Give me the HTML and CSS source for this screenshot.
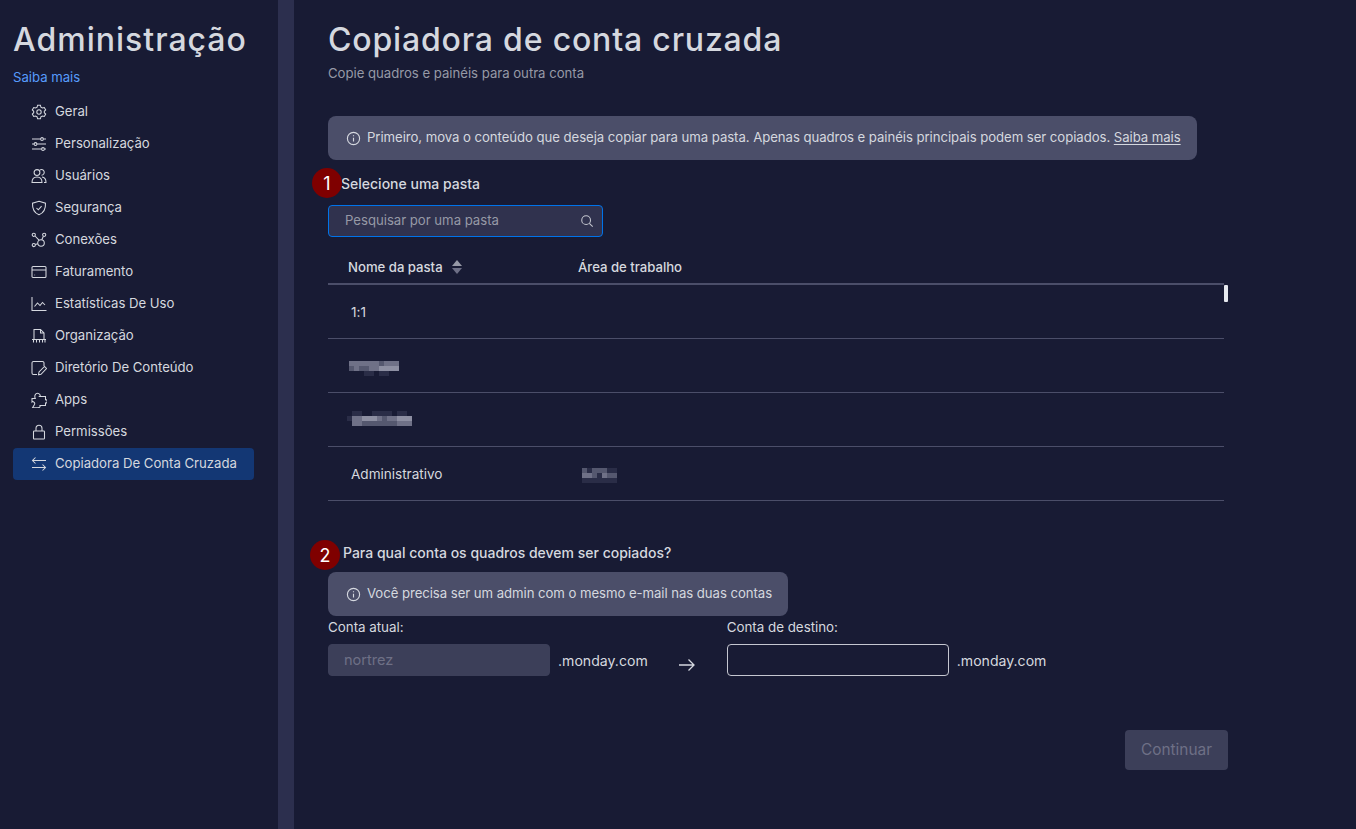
FILE: index.html
```html
<!DOCTYPE html>
<html lang="pt">
<head>
<meta charset="utf-8">
<title>Copiadora de conta cruzada</title>
<link rel="stylesheet" href="styles.css">
</head>
<body>
<div class="app">
  <aside class="sidebar">
    <h2 class="side-title">Administração</h2>
    <a class="side-link">Saiba mais</a>
    <nav class="nav">
      <div class="nav-item"><svg class="ico" viewBox="0 0 16 16"><path d="M6.600 1.200h2.800l.5 1.900 1.500.9 1.900-.5 1.400 2.400-1.400 1.400v1.400l1.400 1.400-1.400 2.400-1.900-.5-1.500.9-.5 1.900H6.600l-.5-1.900-1.500-.9-1.900.5-1.400-2.400 1.400-1.400V7.300L1.300 5.900l1.400-2.400 1.900.5 1.500-.9z"/><circle cx="8" cy="8" r="2.200"/></svg>Geral</div>
      <div class="nav-item"><svg class="ico" viewBox="0 0 16 16"><path d="M1 3h8.500M12.500 3H15M1 8h2M6 8h9M1 13h9.500M13.500 13H15"/><circle cx="11" cy="3" r="1.400"/><circle cx="4.500" cy="8" r="1.400"/><circle cx="12" cy="13" r="1.400"/></svg>Personalização</div>
      <div class="nav-item"><svg class="ico" viewBox="0 0 16 16"><circle cx="6" cy="4.500" r="2.900"/><path d="M9 2a2.800 2.800 0 1 1 1.500 5.200M1 14.500c0-3.600 1.900-5.600 5-5.600s5 2 5 5.600zM11 9c2.500.2 4 2.300 4 5.500h-2"/></svg>Usuários</div>
      <div class="nav-item"><svg class="ico" viewBox="0 0 16 16"><path d="M8 1.200l6.500 2c.3 5.800-1.500 9.500-6.500 11.600C3 12.700 1.200 9 1.500 3.200z"/><path d="M5.500 8l1.800 1.800 3.300-3.600"/></svg>Segurança</div>
      <div class="nav-item"><svg class="ico" viewBox="0 0 16 16"><circle cx="2.800" cy="2.800" r="1.600"/><circle cx="13.200" cy="2.800" r="1.600"/><circle cx="2.800" cy="13" r="1.600"/><circle cx="10" cy="11" r="3.300"/><path d="M4 4l4 4.200M12.400 4.200l-1.600 3.600M4.300 12.600l2.500-.8"/></svg>Conexões</div>
      <div class="nav-item"><svg class="ico" viewBox="0 0 16 16"><rect x="1" y="2.500" width="14" height="11" rx="1"/><path d="M1 6h14M3.500 11h.6"/></svg>Faturamento</div>
      <div class="nav-item"><svg class="ico" viewBox="0 0 16 16"><path d="M1 1v13.500h14.500M3.500 10.500l3-3.500 2.500 2.500 2.500-3 2.500 2.500"/></svg>Estatísticas De Uso</div>
      <div class="nav-item"><svg class="ico" viewBox="0 0 16 16"><path d="M3 11.500V1.500h6.500l3.500 3.500v6.500M9.500 1.500V5H13M1 11.500h14M2.500 11.500v3M5.500 11.500v3M8.500 11.500v3M11.500 11.500v3M14 11.500v3"/></svg>Organização</div>
      <div class="nav-item"><svg class="ico" viewBox="0 0 16 16"><path d="M13 6V3a1.500 1.500 0 0 0-1.500-1.500h-9A1.500 1.500 0 0 0 1 3v10a1.500 1.500 0 0 0 1.500 1.500H6"/><path d="M7.500 14.800L8 12l5.500-5.500 2 2L10 14.300z"/></svg>Diretório De Conteúdo</div>
      <div class="nav-item"><svg class="ico" viewBox="0 0 16 16"><path d="M1 6.500h3.300c-1.300-3 .3-5.300 2.200-5.300s3.500 2.300 2.200 3.300h5.800v3.200c2.300-.6 2.300 3.800 0 3.300v2.500H9c.5 1.500-.7 2.300-2 2.300H1.500l2-3.300c.9-1.900-1.500-3.500-2.500-2.500z"/></svg>Apps</div>
      <div class="nav-item"><svg class="ico" viewBox="0 0 16 16"><rect x="2.500" y="7" width="11" height="8" rx=".8"/><path d="M5 7V4.200a3 3 0 0 1 6 0V7"/></svg>Permissões</div>
      <div class="nav-item active"><svg class="ico" viewBox="0 0 16 16"><path d="M15 4.500H1.500M4.500 1.500l-3 3 3 3M1 11.500h13.500M11.500 8.500l3 3-3 3"/></svg>Copiadora De Conta Cruzada</div>
    </nav>
  </aside>
  <div class="rail"></div>
  <main class="main">
    <h1 class="title">Copiadora de conta cruzada</h1>
    <p class="subtitle">Copie quadros e painéis para outra conta</p>
    <div class="banner banner-wide">
      <svg class="info" viewBox="0 0 16 16"><circle cx="8" cy="8" r="6.500"/><path d="M8 7.300v4M8 4.600v1"/></svg>
      <span>Primeiro, mova o conteúdo que deseja copiar para uma pasta. Apenas quadros e painéis principais podem ser copiados. <u>Saiba mais</u></span>
    </div>
    <div class="step-head step-one"><span class="badge badge-one">1</span>Selecione uma pasta</div>
    <div class="search">
      <span>Pesquisar por uma pasta</span>
      <svg class="search-ico" viewBox="0 0 16 16"><circle cx="7" cy="7" r="5"/><path d="M10.700 10.700l3.800 3.800"/></svg>
    </div>
    <div class="table">
      <div class="thead">
        <div class="col-a">Nome da pasta<svg class="sort" viewBox="0 0 10 14"><path d="M5 0l5 6H0z" class="sort-up"/><path d="M5 14L0 8h10z" class="sort-down"/></svg></div>
        <div class="col-b">Área de trabalho</div>
        <span class="thumb"></span>
      </div>
      <div class="row"><div class="col-a cell cell-text">1:1</div></div>
      <div class="row"><div class="col-a cell">
        <svg class="mosaic mosaic-a" width="50" height="15" viewBox="0 0 50 15"><path class="m2" d="M0 0h15v5H0zM15 0h15v5H15zM35 0h15v5H35zM5 5h5v5H5zM20 5h10v5H20z"/><path class="m1" d="M30 0h5v5h-5zM0 5h5v5H0zM10 5h10v5H10z"/><path class="m3" d="M30 5h20v5H30z"/><path class="m0" d="M15 10h10v5H15zM30 10h10v5H30z"/></svg>
      </div></div>
      <div class="row"><div class="col-a cell">
        <svg class="mosaic mosaic-b" width="65" height="15" viewBox="0 0 65 15"><path class="m0" d="M5 0h10v5H5zM25 0h20v5H25zM50 0h10v5H50zM0 5h5v5H0z"/><path class="m3" d="M15 5h15v5H15zM50 5h15v5H50z"/><path class="m2" d="M5 5h10v5H5zM30 5h5v5h-5zM40 5h10v5H40zM5 10h10v5H5zM50 10h15v5H50z"/><path class="m1" d="M35 5h5v5h-5zM15 10h35v5H15z"/></svg>
      </div></div>
      <div class="row"><div class="col-a cell cell-text">Administrativo</div><div class="col-b cell">
        <svg class="mosaic mosaic-c" width="35" height="15" viewBox="0 0 35 15"><path class="m1" d="M0 0h5v5H0zM10 0h15v5H10zM10 5h5v5h-5zM25 5h10v5H25z"/><path class="m2" d="M0 5h10v5H0zM20 5h5v5h-5z"/><path class="m0" d="M5 0h5v5H5zM25 0h10v5H25zM15 5h5v5h-5zM0 10h35v5H0z"/></svg>
      </div></div>
    </div>
    <div class="step-head step-two"><span class="badge badge-two">2</span>Para qual conta os quadros devem ser copiados?</div>
    <div class="banner banner-small">
      <svg class="info" viewBox="0 0 16 16"><circle cx="8" cy="8" r="6.500"/><path d="M8 7.300v4M8 4.600v1"/></svg>
      <span>Você precisa ser um admin com o mesmo e-mail nas duas contas</span>
    </div>
    <div class="accounts">
      <div class="acct">
        <label>Conta atual:</label>
        <div class="acct-line"><div class="field disabled">nortrez</div><span class="domain">.monday.com</span></div>
      </div>
      <svg class="arrow" viewBox="0 0 18 14"><path d="M1 7h15M10.500 1.500L16 7l-5.500 5.500"/></svg>
      <div class="acct">
        <label>Conta de destino:</label>
        <div class="acct-line"><div class="field"></div><span class="domain">.monday.com</span></div>
      </div>
    </div>
    <div class="actions"><button class="btn">Continuar</button></div>
  </main>
</div>
</body>
</html>
```
FILE: styles.css
```css
* { box-sizing: border-box; }
html, body { margin: 0; height: 100%; }
body {
  background: #181b34;
  color: #d5d8df;
  font-family: Inter, "Noto Sans", sans-serif;
  font-size: 13.2px;
  letter-spacing: -.03px;
  overflow: hidden;
}
.app { display: flex; height: 829px; }
.sidebar { width: 278px; flex: none; padding: 20px 0 0 13px; }
.side-title, .title {
  margin: 0;
  font: 500 32px/40px Inter, sans-serif;
  color: #d5d8df;
}
.side-title { letter-spacing: 1px; }
.title { letter-spacing: .82px; }
.side-link { display: block; margin-top: 7px; line-height: 20px; color: #579bfc; }
.nav { margin-top: 9px; }
.nav-item {
  display: flex; align-items: center; gap: 8px;
  width: 241px; height: 32px; padding: 0 0 2px 18px;
}
.nav-item.active { background: #133774; border-radius: 4px; }
.ico { width: 16px; height: 16px; margin-top: 2px; flex: none; fill: none; stroke: #d5d8df; stroke-width: 1.05; }
.rail { width: 16px; flex: none; background: #2c2f4e; }
.main { flex: 1; padding: 20px 0 0 34px; }
.subtitle { margin: 3px 0 0; line-height: 20px; color: #9699a6; }
.banner {
  display: flex; align-items: center; gap: 6px;
  height: 44px; padding: 0 16px 2px 18px;
  background: #4b4e69; border-radius: 8px;
  width: max-content;
  letter-spacing: -.065px;
}
.banner-wide { margin-top: 33px; }
.banner u { text-underline-offset: 2px; }
.info { width: 15px; height: 15px; margin-top: 2px; fill: none; stroke: #d5d8df; stroke-width: 1.2; flex: none; }
.step-head { display: flex; align-items: center; font-size: 14px; letter-spacing: 0; font-weight: 500; position: relative; height: 20px; }
.step-one { margin-top: 13px; padding-left: 13px; }
.step-two { margin-top: 41px; padding-left: 15px; }
.badge {
  position: absolute; width: 30px; height: 30px; border-radius: 50%;
  background: #7f0000; color: #fff; font-size: 18px;
  display: flex; align-items: center; justify-content: center; font-weight: 400;
}
.badge-one { left: -16px; top: -5px; }
.badge-two { left: -18px; top: -2px; }
.search {
  display: flex; align-items: center; justify-content: space-between;
  width: 275px; height: 32px; margin-top: 12px; padding: 0 8px 0 16px;
  background: #30324e; border: 1px solid #0073ea; border-radius: 4px; color: #9699a6;
}
.search span { margin-bottom: 2px; }
.search-ico { width: 14px; height: 14px; fill: none; stroke: #c5c7d0; stroke-width: 1.2; }
.table { width: 896px; margin-top: 14px; }
.thead {
  display: flex; align-items: center; height: 34px; font-weight: 500;
  border-bottom: 2px solid #4b4e69; position: relative;
}
.col-a { width: 250px; padding-left: 20px; display: flex; align-items: center; }
.col-b { flex: 1; }
.sort { width: 10px; height: 14px; margin-left: 9px; }
.sort-up { fill: #9699a6; }
.sort-down { fill: #6e7086; }
.thumb { position: absolute; right: -4px; top: 34px; width: 4px; height: 17px; background: #e6e9ef; border-radius: 1px; }
.row { display: flex; align-items: center; height: 54px; border-bottom: 1px solid #4b4e69; }
.cell { padding-left: 23px; }
.cell-text { font-size: 13.6px; }
.col-b.cell { padding-left: 4px; }
.mosaic { display: block; }
.mosaic-a { margin: 6px 0 0 -2px; }
.mosaic-b { margin: -2px 0 0 -4px; }
.mosaic-c { margin-top: 4px; }
.m0 { fill: #2a2d47; }
.m1 { fill: #55586f; }
.m2 { fill: #6f7187; }
.m3 { fill: #8d8fa2; }
.banner-small { margin-top: 10px; }
.accounts { display: flex; align-items: flex-start; }
.acct label { display: block; line-height: 22px; font-size: 13.4px; }
.acct-line { display: flex; align-items: center; gap: 8px; margin-top: 6px; }
.field { width: 222px; height: 32px; border: 1px solid #c5c7d0; border-radius: 4px; padding-left: 15px; line-height: 30px; font-size: 14.6px; }
.field.disabled { background: #3c3f59; border-color: #3c3f59; color: #6e7086; }
.domain { font-size: 14.1px; letter-spacing: 0; color: #d5d8df; }
.arrow { width: 18px; height: 14px; margin: 42px 31px 0 30px; flex: none; fill: none; stroke: #d5d8df; stroke-width: 1.3; }
.actions { width: 900px; display: flex; justify-content: flex-end; margin-top: 54px; }
.btn {
  width: 103px; height: 40px; padding: 0 0 2px; border: 0; border-radius: 4px;
  background: #3c3f59; color: #6e7086; font: 400 15.4px Inter, sans-serif;
}
```
